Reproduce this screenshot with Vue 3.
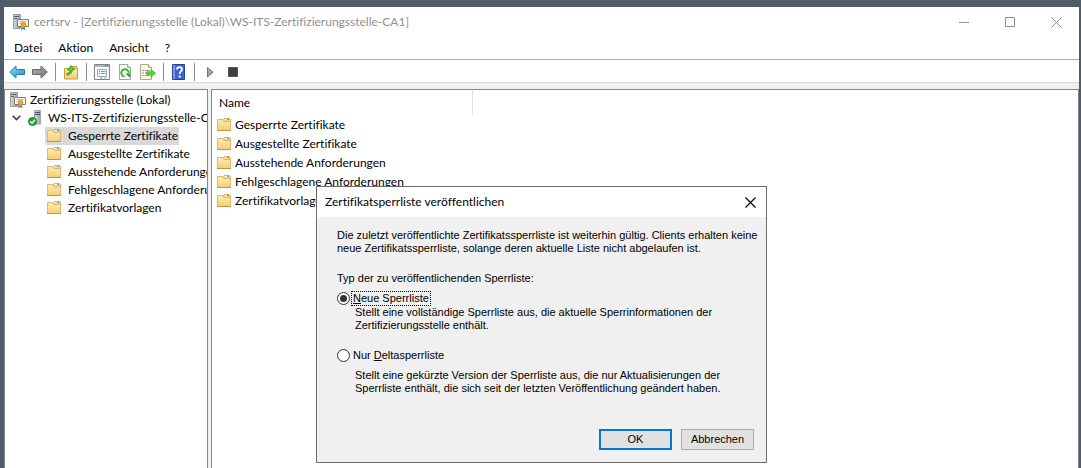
<script setup>
import { ref } from 'vue'

const menus = ['Datei', 'Aktion', 'Ansicht', '?']
const folders = [
  'Gesperrte Zertifikate',
  'Ausgestellte Zertifikate',
  'Ausstehende Anforderungen',
  'Fehlgeschlagene Anforderungen',
  'Zertifikatvorlagen',
]
const selected = ref(0)
const listType = ref('new')
</script>

<template>
  <div class="desktop">
    <svg class="defs" width="0" height="0" aria-hidden="true">
      <defs>
        <linearGradient id="gFolder" x1="0" y1="0" x2="0" y2="1">
          <stop offset="0" stop-color="#ffecb0" />
          <stop offset="1" stop-color="#f3cf77" />
        </linearGradient>
        <linearGradient id="gBlue" x1="0" y1="0" x2="1" y2="1">
          <stop offset="0" stop-color="#8fdcf8" />
          <stop offset="1" stop-color="#1a8fdc" />
        </linearGradient>
        <linearGradient id="gGray" x1="0" y1="0" x2="1" y2="1">
          <stop offset="0" stop-color="#b5b5b5" />
          <stop offset="1" stop-color="#6f6f6f" />
        </linearGradient>
        <linearGradient id="gServer" x1="0" y1="0" x2="1" y2="0">
          <stop offset="0" stop-color="#d4d9dc" />
          <stop offset="1" stop-color="#9ba2a7" />
        </linearGradient>
        <symbol id="folder" viewBox="0 0 16 16">
          <path d="M7.500 5V2.500l1-1h5l1 1V5z" fill="#f5d78c" stroke="#d3ac5c" />
          <path d="M9 2.500h4" stroke="#fff" />
          <path d="M11 2.500h2" stroke="#5b9bd8" />
          <path d="M1.500 2.500h5l1.500 2h6.500v9h-13z" fill="url(#gFolder)" stroke="#e0ba6a" />
          <path d="M1 13.500h14" stroke="#bf9748" />
        </symbol>
        <symbol id="ca" viewBox="0 0 16 16">
          <path d="M.5.500h7v14h-7z" fill="url(#gServer)" stroke="#9aa1a6" />
          <path d="M1 2.500h5M1 4.500h3" stroke="#5c6368" />
          <path d="M4.500 5.500h11v7h-11z" fill="#fffdf2" stroke="#8c7d58" />
          <path d="M6.500 7.500h7M6.500 9.500h2" stroke="#b8b6ac" />
          <path d="M5 13.500h3" stroke="#58c33a" />
          <path d="M9 12l-1 4 2-1zM11 12l1.500 4-2.500-1z" fill="#1f64d4" />
          <circle cx="10.500" cy="10.800" r="2.400" fill="#f3ae22" stroke="#ba7611" stroke-width=".7" />
        </symbol>
        <symbol id="server" viewBox="0 0 16 16">
          <path d="M6.500.500h6v13.500h-6z" fill="url(#gServer)" stroke="#a0a6aa" />
          <path d="M7 2.500h5M7 4.500h5" stroke="#4c5358" />
          <path d="M10 10.500h2" stroke="#74da4a" />
          <circle cx="4.500" cy="11.500" r="4" fill="#24a33a" stroke="#0d7a22" stroke-width=".8" />
          <path d="M2.300 11.500l1.700 1.800 3-3.600" fill="none" stroke="#fff" stroke-width="1.400" />
        </symbol>
      </defs>
    </svg>

    <main class="window">
      <header class="titlebar">
        <svg class="ico" aria-hidden="true"><use href="#ca" /></svg>
        <h1 class="title">certsrv - [Zertifizierungsstelle (Lokal)\WS-ITS-Zertifizierungsstelle-CA1]</h1>
        <div class="controls">
          <button type="button" aria-label="Minimieren">
            <svg width="11" height="11"><path d="M0 5.500h10" stroke="#8f8f8f" /></svg>
          </button>
          <button type="button" aria-label="Maximieren">
            <svg width="11" height="11"><path d="M.5.500h9v9h-9z" fill="none" stroke="#8f8f8f" /></svg>
          </button>
          <button type="button" aria-label="Schließen">
            <svg width="11" height="11"><path d="M.5.500l10 10M10.500.500l-10 10" stroke="#8f8f8f" /></svg>
          </button>
        </div>
      </header>

      <nav class="menubar">
        <button v-for="m in menus" :key="m" type="button">{{ m }}</button>
      </nav>

      <div class="toolbar">
        <button type="button" aria-label="Zurück">
          <svg class="ico" viewBox="0 0 16 16"><path d="M.7 8L7 2v3.500h8.500v5H7V14z" fill="url(#gBlue)" stroke="#2b7fb8" /></svg>
        </button>
        <button type="button" aria-label="Vorwärts">
          <svg class="ico" viewBox="0 0 16 16"><path d="M15.300 8L9 2v3.500H.5v5H9V14z" fill="url(#gGray)" stroke="#666" /></svg>
        </button>
        <span class="sep"></span>
        <button type="button" aria-label="Eine Ebene nach oben">
          <svg class="ico" viewBox="0 0 16 16">
            <path d="M9 4V2.500h5V5" fill="#f3d588" stroke="#c9a256" />
            <path d="M1.500 4.500h13v10.500h-13z" fill="url(#gFolder)" stroke="#c79e4a" />
            <path d="M3.500 9.500c2.500-.3 3.500-1.500 3.500-3.500H4.500L8 1.500 11.500 6H9.200c0 3-2 4.800-5.200 5.200z" fill="#53cf2b" stroke="#2c9a14" stroke-width=".8" />
          </svg>
        </button>
        <span class="sep"></span>
        <button type="button" aria-label="Eigenschaften">
          <svg class="ico" viewBox="0 0 16 16">
            <path d="M.5.500h15v15H.5z" fill="#fff" stroke="#7e868d" />
            <path d="M1 2h14" stroke="#aeb7bf" stroke-width="2" />
            <path d="M11 2h1M13 2h1" stroke="#445" />
            <path d="M3.500 5.500h9v7h-9z" fill="#f6f9fc" stroke="#9aa9b6" />
            <path d="M5 7.500h1M5 9.500h1" stroke="#38a" />
            <path d="M7 7.500h4.500M7 9.500h4.500" stroke="#8294a5" />
            <path d="M6 14h2.500" stroke="#32a6da" /><path d="M10 14h3" stroke="#aaa" />
          </svg>
        </button>
        <button type="button" aria-label="Aktualisieren">
          <svg class="ico" viewBox="0 0 16 16">
            <path d="M2.500.500h8l3 3v12h-11z" fill="#fdfdfb" stroke="#a5a49c" />
            <path d="M10.500.500v3h3" fill="#e4e4e0" stroke="#a5a49c" />
            <path d="M7.500 12.500A3.700 3.700 0 1 1 11.700 9" fill="none" stroke="#2fb52a" stroke-width="2" />
            <path d="M8 9.500h5v4z" fill="#219c20" />
          </svg>
        </button>
        <button type="button" aria-label="Liste exportieren">
          <svg class="ico" viewBox="0 0 16 16">
            <path d="M.5.500h8l3 3v12H.5z" fill="#fffbe6" stroke="#b1a88b" />
            <path d="M8.500.500v3h3" fill="#efe8cc" stroke="#b1a88b" />
            <path d="M2.500 6.500h1M2.500 9h1M2.500 11.500h1" stroke="#333" />
            <path d="M5 6.500h4.500M5 9h3M5 11.500h4" stroke="#8b86a8" />
            <path d="M7 7.800h4V5.500L15.600 9.300 11 13v-2.300H7z" fill="#5fd436" stroke="#36a81c" stroke-width=".7" />
          </svg>
        </button>
        <span class="sep"></span>
        <button type="button" aria-label="Hilfe">
          <svg class="ico" viewBox="0 0 16 16">
            <path d="M1.500.500h12v15h-12z" fill="#3f63cf" stroke="#233f9c" />
            <path d="M2 1h2v14H2z" fill="#7e9bea" />
            <path d="M6 5.500c0-3.300 5-3.300 5 0 0 2-2.400 2-2.400 4.500" fill="none" stroke="#fff" stroke-width="1.700" />
            <path d="M7.600 11.500h2v2h-2z" fill="#fff" />
          </svg>
        </button>
        <span class="sep"></span>
        <button type="button" aria-label="Starten">
          <svg class="ico" viewBox="0 0 16 16"><path d="M5.500 3.500v9.500L11 8.200z" fill="#a5a5a5" stroke="#777" /></svg>
        </button>
        <button type="button" aria-label="Beenden">
          <svg class="ico" viewBox="0 0 16 16"><path d="M3.500 3.500h9v9h-9z" fill="#3e3e3e" stroke="#555" /></svg>
        </button>
      </div>

      <div class="panes">
        <aside class="tree">
          <div class="row root">
            <svg class="ico" aria-hidden="true"><use href="#ca" /></svg>
            <span>Zertifizierungsstelle (Lokal)</span>
          </div>
          <div class="row host">
            <svg class="chev" width="9" height="6" aria-hidden="true"><path d="M.7.700L4.500 4.500 8.300.700" fill="none" stroke="#404040" stroke-width="1.600" /></svg>
            <svg class="ico" aria-hidden="true"><use href="#server" /></svg>
            <span>WS-ITS-Zertifizierungsstelle-CA1</span>
          </div>
          <button
            v-for="(f, i) in folders"
            :key="f"
            type="button"
            class="row leaf"
            :class="{ active: i === selected }"
            @click="selected = i"
          >
            <svg class="ico" aria-hidden="true"><use href="#folder" /></svg>
            <span>{{ f }}</span>
          </button>
        </aside>

        <section class="list">
          <table>
            <thead>
              <tr><th scope="col">Name</th></tr>
            </thead>
            <tbody>
              <tr v-for="f in folders" :key="f">
                <td><div class="item"><svg class="ico" aria-hidden="true"><use href="#folder" /></svg>{{ f }}</div></td>
              </tr>
            </tbody>
          </table>
        </section>
      </div>
    </main>

    <form class="dialog" role="dialog" aria-labelledby="dlgTitle" @submit.prevent>
      <header class="dialog-head">
        <h2 id="dlgTitle">Zertifikatsperrliste veröffentlichen</h2>
        <button type="button" aria-label="Schließen">
          <svg class="close" width="11" height="11"><path d="M.5.500l10 10M10.500.500l-10 10" stroke="#000" stroke-width="1.200" /></svg>
        </button>
      </header>
      <div class="dialog-body">
        <p>Die zuletzt veröffentlichte Zertifikatssperrliste ist weiterhin gültig. Clients erhalten keine<br />neue Zertifikatssperrliste, solange deren aktuelle Liste nicht abgelaufen ist.</p>
        <p id="typeLabel" class="type">Typ der zu veröffentlichenden Sperrliste:</p>
        <div role="radiogroup" aria-labelledby="typeLabel">
          <div class="option">
            <input id="optNew" v-model="listType" type="radio" name="listType" value="new" />
            <label for="optNew" class="focused"><u>N</u>eue Sperrliste</label>
          </div>
          <p class="desc">Stellt eine vollständige Sperrliste aus, die aktuelle Sperrinformationen der<br />Zertifizierungsstelle enthält.</p>
          <div class="option second">
            <input id="optDelta" v-model="listType" type="radio" name="listType" value="delta" />
            <label for="optDelta">Nur <u>D</u>eltasperrliste</label>
          </div>
          <p class="desc spaced">Stellt eine gekürzte Version der Sperrliste aus, die nur Aktualisierungen der<br />Sperrliste enthält, die sich seit der letzten Veröffentlichung geändert haben.</p>
        </div>
        <footer class="actions">
          <button type="submit" class="primary">OK</button>
          <button type="button">Abbrechen</button>
        </footer>
      </div>
    </form>
  </div>
</template>

<style>
body {
  background: #505c69;
}
</style>

<style scoped>
* {
  box-sizing: border-box;
}
.desktop {
  position: relative;
  display: flex;
  min-height: 100vh;
  padding: 7px 2px 0 4px;
  overflow: hidden;
  background: #505c69;
  color: #000;
  font: 12px/18px Lato, "Open Sans", sans-serif;
  font-variant-ligatures: none;
}
.defs {
  position: absolute;
}
button {
  padding: 0;
  border: 0;
  background: none;
  color: inherit;
  font: inherit;
  font-variant-ligatures: none;
}
h1,
h2,
p {
  margin: 0;
  font-size: inherit;
  font-weight: inherit;
}
.ico {
  display: block;
  flex: none;
  width: 16px;
  height: 16px;
}
.window {
  display: flex;
  flex: 1;
  flex-direction: column;
  min-width: 0;
  background: #fff;
}
.titlebar {
  display: flex;
  align-items: center;
  height: 30px;
  padding-left: 9px;
  gap: 5px;
}
.title {
  flex: 1;
  color: #8f8f8f;
  white-space: nowrap;
}
.controls {
  display: flex;
}
.controls button {
  display: grid;
  place-items: center;
  width: 46px;
  height: 28px;
}
.menubar {
  display: flex;
  height: 22px;
  padding-left: 10px;
  gap: 16px;
}
.menubar button {
  height: 22px;
}
.toolbar {
  display: flex;
  align-items: center;
  height: 24px;
  padding: 2px 5px 0;
  gap: 7px;
  border-top: 1px solid #adaeb5;
  border-bottom: 1px solid #d9d9d9;
}
.sep {
  width: 1px;
  height: 18px;
  background: #8a8a8a;
}
.panes {
  display: flex;
  flex: 1;
  gap: 3px;
  padding-top: 6px;
  background: #f0f0f0;
}
.tree,
.list {
  border: 1px solid #828790;
  border-bottom: 0;
  background: #fff;
}
.tree {
  flex: 0 0 204px;
  padding-top: 1px;
  overflow: hidden;
}
.row {
  display: flex;
  align-items: center;
  height: 18px;
  padding-left: 5px;
  gap: 4px;
  white-space: nowrap;
}
.host {
  padding-left: 7px;
}
.chev {
  flex: none;
  margin-right: 3px;
}
.leaf {
  margin-left: 40px;
  padding: 0 1px;
}
.leaf .ico {
  margin-right: 2px;
}
.active {
  background: #d9d9d9;
}
.list {
  flex: 1;
  min-width: 0;
}
table {
  width: 261px;
  border-collapse: collapse;
}
th {
  height: 25px;
  padding: 0 7px;
  border-right: 1px solid #e0e0e0;
  font-weight: normal;
  text-align: left;
}
td {
  padding: 0;
}
.item {
  display: flex;
  align-items: center;
  height: 19px;
  padding-left: 4px;
  gap: 3px;
  white-space: nowrap;
}
.dialog {
  position: absolute;
  top: 186px;
  left: 316px;
  width: 451px;
  border: 1px solid #6c6c6c;
  background: #f0f0f0;
}
.dialog-head {
  display: flex;
  align-items: center;
  justify-content: space-between;
  height: 30px;
  padding: 0 10px 0 8px;
  background: #fff;
}
.close {
  display: block;
}
.dialog-body {
  padding: 12px 12px 12px 20px;
  font: 11px/13px "Liberation Sans", Arial, sans-serif;
}
.dialog-body p {
  white-space: nowrap;
}
.dialog-body .type {
  margin: 17px 0 6px;
}
.option {
  display: flex;
  align-items: center;
  height: 15px;
  gap: 2px;
}
.option input {
  display: grid;
  place-items: center;
  width: 13px;
  height: 13px;
  margin: 0;
  appearance: none;
  border: 1px solid #333;
  border-radius: 50%;
  background: #fff;
}
.option input:checked::before {
  width: 7px;
  height: 7px;
  border-radius: 50%;
  background: #333;
  content: "";
}
.option label {
  padding: 0 1px;
}
.focused {
  outline: 1px dotted #000;
}
.second {
  margin-top: 16px;
}
.desc {
  padding-left: 18px;
}
.spaced {
  margin-top: 6px;
}
.actions {
  display: flex;
  justify-content: flex-end;
  margin-top: 34px;
  gap: 9px;
}
.actions button {
  width: 73px;
  height: 21px;
  border: 1px solid #adadad;
  background: #e1e1e1;
}
.actions .primary {
  border: 2px solid #0078d7;
}
</style>
